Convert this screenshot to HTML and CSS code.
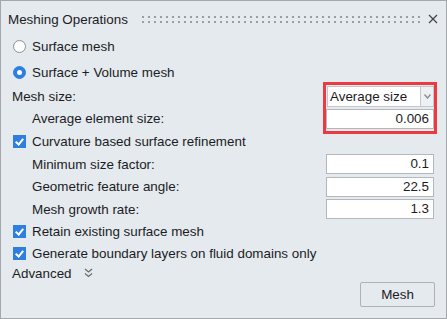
FILE: index.html
```html
<!DOCTYPE html>
<html lang="en">
<head>
    <meta charset="UTF-8">
    <title>Meshing Operations</title>
    <link rel="stylesheet" href="styles.css">
</head>
<body>
    <div class="panel">
        <div class="header">
            <span class="title">Meshing Operations</span>
            <svg class="grip" width="280" height="8">
                <defs>
                    <pattern id="dots" width="6" height="5" patternUnits="userSpaceOnUse">
                        <rect x="0" y="0" width="2" height="2" fill="#9a9ea2"/>
                    </pattern>
                </defs>
                <rect width="280" height="8" fill="url(#dots)"/>
            </svg>
            <svg class="close" width="10" height="10" viewBox="0 0 10 10">
                <path d="M1 1 L9 9 M9 1 L1 9" stroke="#444" stroke-width="1.2"/>
            </svg>
        </div>

        <div class="row radio-row">
            <span class="radio"></span>
            <span>Surface mesh</span>
        </div>
        <div class="row radio-row">
            <span class="radio checked"></span>
            <span>Surface + Volume mesh</span>
        </div>

        <div class="row field-row">
            <span class="label">Mesh size:</span>
            <div class="select">
                <span>Average size</span>
                <span class="arrow">
                    <svg width="7" height="5" viewBox="0 0 7 5"><path d="M0.5 0.5 L3.5 4 L6.5 0.5" fill="none" stroke="#8a8e92" stroke-width="1.4"/></svg>
                </span>
            </div>
        </div>
        <div class="row field-row tall">
            <span class="label sub">Average element size:</span>
            <div class="input">0.006</div>
        </div>
        <div class="row check-row tall">
            <span class="check"></span>
            <span>Curvature based surface refinement</span>
        </div>
        <div class="row field-row">
            <span class="label sub">Minimum size factor:</span>
            <div class="input">0.1</div>
        </div>
        <div class="row field-row tall">
            <span class="label sub">Geometric feature angle:</span>
            <div class="input">22.5</div>
        </div>
        <div class="row field-row">
            <span class="label sub">Mesh growth rate:</span>
            <div class="input">1.3</div>
        </div>
        <div class="row check-row">
            <span class="check"></span>
            <span>Retain existing surface mesh</span>
        </div>
        <div class="row check-row">
            <span class="check"></span>
            <span>Generate boundary layers on fluid domains only</span>
        </div>
        <div class="row advanced">
            <span>Advanced</span>
            <svg width="9" height="10" viewBox="0 0 9 10">
                <path d="M1 1 L4.5 4 L8 1 M1 5.5 L4.5 8.5 L8 5.5" fill="none" stroke="#6a6e72" stroke-width="1.3"/>
            </svg>
        </div>

        <div class="footer">
            <button class="mesh-btn">Mesh</button>
        </div>

        <div class="highlight"></div>
    </div>
</body>
</html>
```

FILE: styles.css
```css
html, body {
    margin: 0;
    padding: 0;
}

body {
    font-family: "Liberation Sans", Arial, sans-serif;
    font-size: 13.4px;
    color: #1c1c24;
    background: #ffffff;
}

.panel {
    position: relative;
    width: 447px;
    height: 319px;
    box-sizing: border-box;
    border: 1px solid #a4a8ac;
    background-color: #e4eaee;
    display: flex;
    flex-direction: column;
}

.header {
    height: 32px;
    display: flex;
    align-items: center;
    padding-left: 7px;
    padding-right: 8px;
    padding-top: 4px;
    box-sizing: border-box;
}

.title {
    width: 134px;
}

.grip {
    display: block;
    margin-top: 2px;
}

.close {
    display: block;
    margin-left: auto;
}

.row {
    display: flex;
    align-items: center;
    height: 22px;
    flex-shrink: 0;
    padding-left: 11px;
    padding-right: 12px;
}

.row.tall {
    height: 23px;
}

.radio-row {
    height: 26px;
}

.radio {
    width: 11px;
    height: 11px;
    border: 1px solid #8c9094;
    border-radius: 50%;
    background: #ffffff;
    margin-right: 6px;
    margin-left: 1px;
    position: relative;
}

.radio.checked {
    background: #2f7fe0;
    border-color: #2f7fe0;
}

.radio.checked::after {
    content: "";
    position: absolute;
    left: 3px;
    top: 3px;
    width: 5px;
    height: 5px;
    border-radius: 50%;
    background: #ffffff;
}

.field-row {
    justify-content: space-between;
}

.label.sub {
    padding-left: 20px;
}

.select {
    width: 107px;
    height: 21px;
    box-sizing: border-box;
    border: 1px solid #c4c8cc;
    background: #ffffff;
    display: flex;
    align-items: center;
    padding-left: 2px;
}

.select span:first-child {
    flex: 1;
}

.arrow {
    width: 12px;
    height: 19px;
    border-left: 1px solid #c4c8cc;
    background: #eef1f3;
    display: flex;
    align-items: center;
    justify-content: center;
}

.input {
    width: 108px;
    height: 20px;
    box-sizing: border-box;
    border: 1px solid #b4b8bc;
    background: #ffffff;
    text-align: right;
    padding-right: 4px;
    line-height: 18px;
}

.check {
    width: 13px;
    height: 13px;
    background: #2f7fe0;
    margin-right: 6px;
    margin-left: 1px;
    position: relative;
}

.check::after {
    content: "";
    position: absolute;
    left: 4px;
    top: 2px;
    width: 3px;
    height: 6px;
    border: solid #ffffff;
    border-width: 0 2px 2px 0;
    transform: rotate(40deg);
}

.advanced {
    height: 18px;
}

.advanced svg {
    margin-left: 12px;
}

.footer {
    display: flex;
    justify-content: flex-end;
    padding-right: 11px;
}

.mesh-btn {
    width: 75px;
    height: 25px;
    font-family: "Liberation Sans", Arial, sans-serif;
    font-size: 13.4px;
    color: #1c1c24;
    background: #e4eaee;
    border: 1px solid #aeb2b6;
    border-radius: 2px;
}

.highlight {
    position: absolute;
    left: 322px;
    top: 81px;
    width: 108px;
    height: 46px;
    border: 3px solid #ec3b40;
}
```
